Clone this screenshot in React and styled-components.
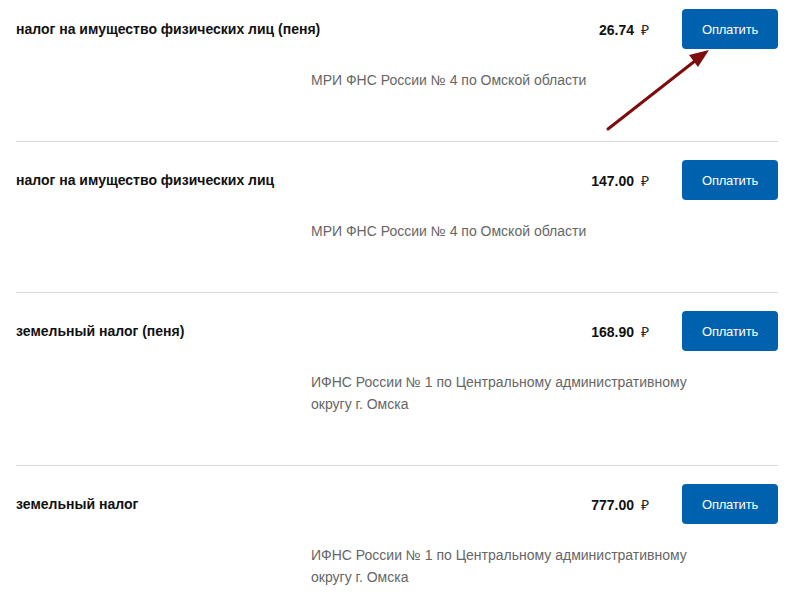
import React from 'react'
import styled, { createGlobalStyle } from 'styled-components'

const taxes = [
    { title: 'налог на имущество физических лиц (пеня)', amount: '26.74', org: 'МРИ ФНС России № 4 по Омской области' },
    { title: 'налог на имущество физических лиц', amount: '147.00', org: 'МРИ ФНС России № 4 по Омской области' },
    { title: 'земельный налог (пеня)', amount: '168.90', org: 'ИФНС России № 1 по Центральному административному округу г. Омска' },
    { title: 'земельный налог', amount: '777.00', org: 'ИФНС России № 1 по Центральному административному округу г. Омска' },
]

const Global = createGlobalStyle`
    body {
        margin: 0;
        background: #fff;
        font-family: Arial, "Liberation Sans", sans-serif;
        overflow: hidden;
    }
`

const Page = styled.div`
    position: relative;
    width: 762px;
    padding: 0 20px 0 16px;
    margin-top: -9px;
`

const Row = styled.div`
    padding: 18px 0 50px;
    border-bottom: 1px solid #d9d9d9;
`

const Head = styled.div`
    display: flex;
    align-items: center;
    height: 40px;
`

const Title = styled.div`
    flex: 1;
    font-size: 14px;
    font-weight: bold;
    color: #111;
`

const Amount = styled.div`
    font-size: 14px;
    font-weight: bold;
    color: #111;
    margin-right: 33px;
    display: flex;
    align-items: baseline;
    gap: 7px;
`

const Rub = styled.span`
    font-weight: normal;
    color: #222;
    font-size: 14px;
`

const PayButton = styled.button`
    width: 96px;
    height: 40px;
    border: none;
    border-radius: 4px;
    background: #0062ae;
    color: #fff;
    font-family: Arial, "Liberation Sans", sans-serif;
    font-size: 13px;
    letter-spacing: -0.2px;
    cursor: pointer;
`

const Org = styled.div`
    margin: 20px 0 0 295px;
    max-width: 390px;
    font-size: 14px;
    line-height: 22px;
    color: #666;
`

const Arrow = styled.svg`
    position: absolute;
    left: 600px;
    top: 50px;
`

export default function App() {
    return (
        <>
            <Global />
            <Page>
                {taxes.map((t, i) => (
                    <Row key={i}>
                        <Head>
                            <Title>{t.title}</Title>
                            <Amount>
                                {t.amount}
                                <Rub>₽</Rub>
                            </Amount>
                            <PayButton>Оплатить</PayButton>
                        </Head>
                        <Org>{t.org}</Org>
                    </Row>
                ))}
                <Arrow width="120" height="100" viewBox="0 0 120 100">
                    <line x1="8" y1="88" x2="100" y2="16" stroke="#7d0d0d" strokeWidth="3" strokeLinecap="round" />
                    <polygon points="109,9 89,14 98,26" fill="#7d0d0d" />
                </Arrow>
            </Page>
        </>
    )
}
